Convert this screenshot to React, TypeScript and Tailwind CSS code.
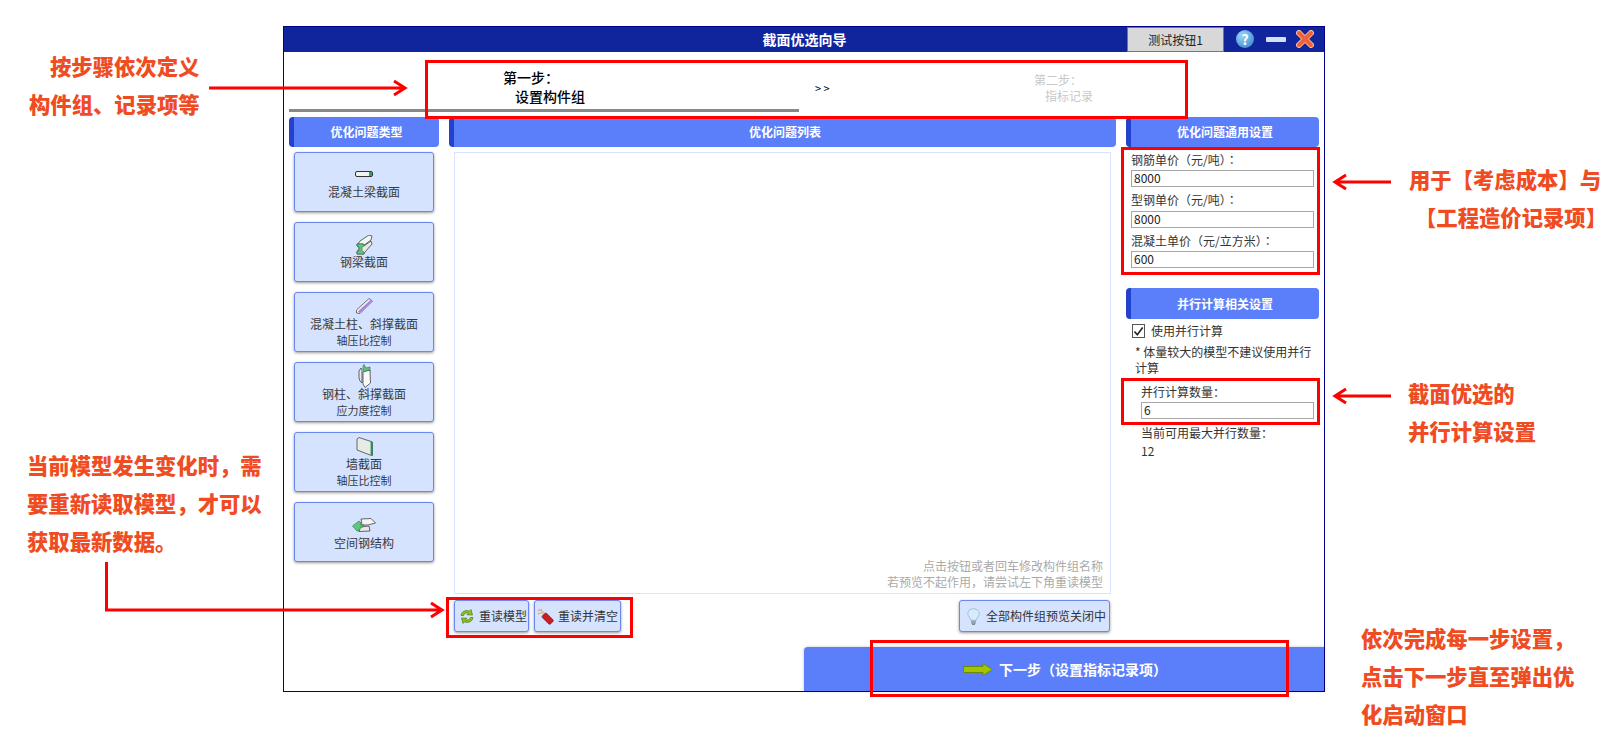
import type { ReactNode } from "react";

function BeamIcon() {
    return (
        <svg width="18" height="6" viewBox="0 0 18 6">
            <rect x="0.5" y="0.5" width="17" height="5" rx="1.5" fill="#f1f4ee" stroke="#333" />
            <rect x="14" y="1" width="3" height="4" fill="#2fa35c" />
        </svg>
    );
}

function SteelBeamIcon() {
    return (
        <svg width="17" height="20" viewBox="0 0 17 20">
            <polygon points="4,6 13,0 16,1 15,5 7,11 2,9" fill="#f4f6f2" stroke="#444" strokeWidth="0.8" />
            <polygon points="8,11 15,6 16,9 9,17 8,19 1,19 1,16 3,15 3,12 1,11 1,9 7,9" fill="#e8ece6" stroke="#444" strokeWidth="0.8" />
            <polygon points="1,9 8,9 8,11 6,12 6,16 8,17 8,19 1,19 1,17 3,16 3,12 1,11" fill="#5fc67e" stroke="#2c6b40" strokeWidth="0.6" />
        </svg>
    );
}

function ColumnBarIcon() {
    return (
        <svg width="17" height="16" viewBox="0 0 17 16">
            <polygon points="0.5,12 13,0.5 16.5,3 4,15.5 0.5,15" fill="#efeaf7" stroke="#555" strokeWidth="0.8" />
            <polygon points="2,13.5 14.5,2 16,3.2 4,15 " fill="#a583e0" />
        </svg>
    );
}

function SteelColumnIcon() {
    return (
        <svg width="13" height="24" viewBox="0 0 13 24">
            <polygon points="1,7 3,4 4,6 4,19 2,17 1,14" fill="#e8e8e8" stroke="#444" strokeWidth="0.8" />
            <polygon points="5,2 6,0.5 8,4 12,3 12,8 8,9 5,6" fill="#5fc67e" stroke="#2c6b40" strokeWidth="0.6" />
            <polygon points="5,8 12,6 12.5,19 7,23.5 5,20" fill="#fafafa" stroke="#444" strokeWidth="0.8" />
        </svg>
    );
}

function WallIcon() {
    return (
        <svg width="17" height="19" viewBox="0 0 17 19">
            <polygon points="1,2 3,0.5 16.5,5 16.5,18.5 14,18 1,13" fill="#e6ebe4" stroke="#444" strokeWidth="0.8" />
            <rect x="14.6" y="5" width="1.8" height="13" fill="#1d9a56" />
        </svg>
    );
}

function SpaceIcon() {
    return (
        <svg width="24" height="14" viewBox="0 0 24 14">
            <polygon points="9,1 19,0.5 23.5,5 16,7 10,7" fill="#f4f4f2" stroke="#444" strokeWidth="0.8" />
            <polygon points="8,9 17,8 18,13 7,13.5" fill="#e8e8e6" stroke="#444" strokeWidth="0.8" />
            <polygon points="0.5,8 7,3 9,5 8,7 12,7 11,9 9,9 7,13 5,13" fill="#5fc67e" stroke="#2c6b40" strokeWidth="0.6" />
        </svg>
    );
}

function RefreshIcon() {
    return (
        <svg width="16" height="17" viewBox="0 0 16 17">
            <path d="M2 7.5C2.5 3.5 7 1.5 10.5 3.2L12 1.5 13.5 7 8 6.8 9.5 5.2C7 4.3 5 5.6 4.6 7.5Z" fill="#8cc21f" stroke="#4f7a10" strokeWidth="0.7" />
            <path d="M14 9.5C13.5 13.5 9 15.5 5.5 13.8L4 15.5 2.5 10 8 10.2 6.5 11.8C9 12.7 11 11.4 11.4 9.5Z" fill="#8cc21f" stroke="#4f7a10" strokeWidth="0.7" />
        </svg>
    );
}

function EraserIcon() {
    return (
        <svg width="17" height="17" viewBox="0 0 17 17">
            <path d="M1 3L3 1.5M4 1L4.5 3.5M1 6L3.5 5" stroke="#f0a050" strokeWidth="1.3" />
            <rect x="4" y="3" width="3" height="3" fill="#d8c090" transform="rotate(45 5.5 4.5)" />
            <rect x="5" y="7.5" width="11.5" height="6" rx="1.5" fill="#c81e24" stroke="#7a1014" strokeWidth="0.6" transform="rotate(45 10.5 10.5)" />
        </svg>
    );
}

function BulbIcon() {
    return (
        <svg width="13" height="17" viewBox="0 0 13 17">
            <path d="M6.5 0.7C3 0.7 0.8 3 0.8 5.8C0.8 8.3 3.5 9.6 3.8 12.3H9.2C9.5 9.6 12.2 8.3 12.2 5.8C12.2 3 10 0.7 6.5 0.7Z" fill="#d6ecfa" stroke="#8fb8d8" strokeWidth="0.8" />
            <rect x="4" y="12.5" width="5" height="3.2" rx="0.8" fill="#9aa4ae" />
            <rect x="5" y="15.6" width="3" height="1.2" fill="#6b747c" />
        </svg>
    );
}

const problemTypes: { lines: string[]; sub?: string; icon: ReactNode; slot: string }[] = [
    { lines: ["混凝土梁截面"], icon: <BeamIcon />, slot: "h-[30px] pt-[18px]" },
    { lines: ["钢梁截面"], icon: <SteelBeamIcon />, slot: "h-[30px] pt-[12px]" },
    { lines: ["混凝土柱、斜撑截面"], sub: "轴压比控制", icon: <ColumnBarIcon />, slot: "h-[22px] pt-[5px]" },
    { lines: ["钢柱、斜撑截面"], sub: "应力度控制", icon: <SteelColumnIcon />, slot: "h-[22px] pt-[1px]" },
    { lines: ["墙截面"], sub: "轴压比控制", icon: <WallIcon />, slot: "h-[22px] pt-[4px]" },
    { lines: ["空间钢结构"], icon: <SpaceIcon />, slot: "h-[31px] pt-[15px]" },
];

function SectionHeader({ title, className }: { title: string; className: string }) {
    return (
        <div className={`flex items-center justify-center rounded-[4px] border-l-[5px] border-[#2342cc] bg-[#5b7ffb] text-[12px] font-bold text-white ${className}`}>
            {title}
        </div>
    );
}

function SmallButton({ icon, label, className }: { icon: ReactNode; label: string; className: string }) {
    return (
        <div className={`flex h-[32px] items-center rounded-[3px] border border-[#6a86f0] bg-[#d5e3ff] text-[12px] text-[#333] shadow-[0_1px_3px_rgba(0,0,0,0.4)] ${className}`}>
            {icon}
            <span className="whitespace-nowrap">{label}</span>
        </div>
    );
}

function PriceField({ label, value, labelClass }: { label: string; value: string; labelClass: string }) {
    return (
        <div className="flex flex-col">
            <div className={`text-[12px] leading-[16px] text-[#333] ${labelClass}`}>{label}</div>
            <div className="h-[17px] border border-[#a8a8a8] bg-white pl-[2px] text-[12px] leading-[14px] text-[#222]">{value}</div>
        </div>
    );
}

function Callout({ lines, className }: { lines: string[]; className: string }) {
    return (
        <div className={`absolute whitespace-nowrap text-[21.33px] font-black leading-[38px] text-[#f04c23] ${className}`}>
            {lines.map(line => (
                <div key={line}>{line}</div>
            ))}
        </div>
    );
}

function RedBox({ className }: { className: string }) {
    return <div className={`pointer-events-none absolute border-[3px] border-[#ff0000] ${className}`} />;
}

export default function App() {
    return (
        <div className="relative h-[747px] w-[1620px] overflow-hidden bg-white pl-[283px] pt-[26px] font-['Noto_Sans_CJK_SC','Liberation_Sans',sans-serif]">
            {/* Wizard window */}
            <div className="flex h-[666px] w-[1042px] flex-col border border-[#00008b] bg-white">
                <div className="relative flex h-[25px] shrink-0 items-center justify-center bg-[#10249c] pl-[1px]">
                    <span className="text-[14px] font-bold text-white">截面优选向导</span>
                    <div className="absolute bottom-0 right-[100px] top-0 flex w-[97px] items-center justify-center border border-[#777] bg-[#d8d8d8] text-[12px] text-[#222]">
                        测试按钮1
                    </div>
                    <div className="absolute right-[70px] top-[3px] flex h-[18px] w-[18px] items-center justify-center rounded-full bg-[radial-gradient(circle_at_35%_30%,#9fd4f7,#2a7fc9)] text-[14px] font-bold leading-none text-white">
                        ?
                    </div>
                    <div className="absolute right-[38px] top-[10px] h-[5px] w-[20px] rounded-[1px] bg-[#d3e1f3]" />
                    <svg className="absolute right-[10px] top-[3px]" width="18" height="18" viewBox="0 0 18 18">
                        <path d="M3 3L15 15M15 3L3 15" stroke="#f8b9a0" strokeWidth="6" strokeLinecap="round" />
                        <path d="M3 3L15 15M15 3L3 15" stroke="#f0623a" strokeWidth="4" strokeLinecap="round" />
                    </svg>
                </div>

                {/* Steps */}
                <div className="flex h-[60px] shrink-0 pl-[5px]">
                    <div className="w-[510px] border-b-[3px] border-[#888] pl-[214px] pt-[16px] text-[14px] font-medium leading-[19px] text-black">
                        <div>第一步：</div>
                        <div className="pl-[12px]">设置构件组</div>
                    </div>
                    <div className="w-[235px] pl-[16px] pt-[29px] text-[11px] leading-[14px] tracking-[2.5px] text-black">&gt;&gt;</div>
                    <div className="pt-[20px] text-[12px] leading-[16px] text-[#c8c8c8]">
                        <div>第二步：</div>
                        <div className="pl-[11px]">指标记录</div>
                    </div>
                </div>

                {/* Main columns */}
                <div className="mt-[5px] flex min-h-0 flex-1 gap-[10px] pl-[5px]">
                    <div className="flex w-[150px] flex-col">
                        <SectionHeader title="优化问题类型" className="h-[30px] shrink-0" />
                        <div className="mt-[5px] flex flex-col gap-[10px] px-[5px]">
                            {problemTypes.map(item => (
                                <div
                                    key={item.lines[0]}
                                    className="flex h-[60px] flex-col items-center rounded-[3px] border border-[#6a86f0] bg-[#d5e3ff] text-[12px] leading-[17px] text-[#3a3a3a] shadow-[0_1px_3px_rgba(0,0,0,0.4)]"
                                >
                                    <div className={`shrink-0 ${item.slot}`}>{item.icon}</div>
                                    {item.lines.map(line => (
                                        <div key={line} className="whitespace-nowrap">{line}</div>
                                    ))}
                                    {item.sub && <div className="text-[11px] leading-[16px]">{item.sub}</div>}
                                </div>
                            ))}
                        </div>
                    </div>

                    <div className="flex w-[667px] flex-col">
                        <SectionHeader title="优化问题列表" className="h-[30px] shrink-0" />
                        <div className="mx-[5px] mt-[5px] flex h-[442px] flex-col items-end justify-end border border-[#d6e4ff] pb-[3px] pr-[7px] text-[12px] leading-[16px] text-[#aaa]">
                            <div>点击按钮或者回车修改构件组名称</div>
                            <div>若预览不起作用，请尝试左下角重读模型</div>
                        </div>
                        <div className="mx-[5px] mt-[6px] flex justify-between">
                            <div className="flex gap-[5px]">
                                <SmallButton icon={<RefreshIcon />} label="重读模型" className="w-[75px] gap-[4px] pl-[4px]" />
                                <SmallButton icon={<EraserIcon />} label="重读并清空" className="w-[87px] gap-[4px] pl-[2px]" />
                            </div>
                            <SmallButton icon={<BulbIcon />} label="全部构件组预览关闭中" className="mr-[1px] w-[151px] gap-[6px] pl-[7px]" />
                        </div>
                    </div>

                    <div className="flex w-[193px] flex-col">
                        <SectionHeader title="优化问题通用设置" className="h-[30px] shrink-0" />
                        <div className="mt-[5px] flex flex-col gap-[5px] px-[5px]">
                            <PriceField label="钢筋单价（元/吨）：" value="8000" labelClass="mb-[2px] font-['Noto_Sans_CJK_TC','Noto_Sans_CJK_SC',sans-serif]" />
                            <PriceField label="型钢单价（元/吨）：" value="8000" labelClass="mb-[3px] font-['Noto_Sans_CJK_TC','Noto_Sans_CJK_SC',sans-serif]" />
                            <PriceField label="混凝土单价（元/立方米）：" value="600" labelClass="mb-[2px] font-['Noto_Sans_CJK_TC','Noto_Sans_CJK_SC',sans-serif]" />
                        </div>
                        <SectionHeader title="并行计算相关设置" className="mt-[20px] h-[31px] shrink-0" />
                        <div className="mt-[5px] flex items-center gap-[6px] pl-[6px] text-[12px] leading-[14px] text-[#333]">
                            <div className="flex h-[14px] w-[13px] items-center justify-center border border-[#555] bg-white">
                                <svg width="11" height="11" viewBox="0 0 11 11">
                                    <path d="M1.5 5.5L4.3 8.8L9.7 1.5" fill="none" stroke="#222" strokeWidth="1.6" />
                                </svg>
                            </div>
                            <span>使用并行计算</span>
                        </div>
                        <div className="mt-[6px] pl-[9px] pr-[5px] text-[12px] leading-[16px] text-[#333]">
                            * 体量较大的模型不建议使用并行计算
                        </div>
                        <div className="mt-[8px] pl-[15px] pr-[5px]">
                            <PriceField label="并行计算数量：" value="6" labelClass="mb-[2px]" />
                        </div>
                        <div className="mt-[5px] pl-[15px] text-[12px] leading-[18px] text-[#333]">
                            <div>当前可用最大并行数量：</div>
                            <div>12</div>
                        </div>
                    </div>
                </div>

                {/* Next step */}
                <div className="flex h-[44px] w-[520px] shrink-0 items-center gap-[6px] self-end rounded-tl-[4px] bg-[#5b7ffb] pl-[159px] text-[14px] font-bold text-white shadow-[0_0_3px_rgba(0,0,0,0.25)]">
                    <svg width="30" height="13" viewBox="0 0 30 13">
                        <polygon points="0.5,3.5 20,3.5 20,0.5 29.5,6.5 20,12.5 20,9.5 0.5,9.5" fill="#a3c400" stroke="#6d8a10" />
                    </svg>
                    <span>下一步（设置指标记录项）</span>
                </div>
            </div>

            {/* Annotation frames */}
            <RedBox className="left-[425px] top-[60px] h-[59px] w-[763px]" />
            <RedBox className="left-[1121px] top-[147px] h-[128px] w-[199px]" />
            <RedBox className="left-[1121px] top-[378px] h-[47px] w-[199px]" />
            <RedBox className="left-[446px] top-[597px] h-[41px] w-[187px]" />
            <RedBox className="left-[870px] top-[640px] h-[57px] w-[419px]" />

            {/* Arrows */}
            <svg className="pointer-events-none absolute left-0 top-0" width="1620" height="747" viewBox="0 0 1620 747">
                <g fill="none" stroke="#ff0000" strokeWidth="3">
                    <path d="M209 88H404M394 81L405 88L394 95" />
                    <path d="M106.5 562V610H440M431 603L442 610L431 617" />
                    <path d="M1391 182H1335M1346 175L1335 182L1346 189" />
                    <path d="M1391 396H1335M1346 389L1335 396L1346 403" />
                </g>
            </svg>

            {/* Callouts */}
            <Callout lines={["按步骤依次定义"]} className="left-[50px] top-[47px]" />
            <Callout lines={["构件组、记录项等"]} className="left-[29px] top-[85px]" />
            <Callout lines={["当前模型发生变化时，需", "要重新读取模型，才可以", "获取最新数据。"]} className="left-[27px] top-[446px]" />
            <Callout lines={["用于【考虑成本】与"]} className="left-[1409px] top-[160px]" />
            <Callout lines={["【工程造价记录项】"]} className="left-[1415px] top-[198px]" />
            <Callout lines={["截面优选的", "并行计算设置"]} className="left-[1408px] top-[374px]" />
            <Callout lines={["依次完成每一步设置，", "点击下一步直至弹出优", "化启动窗口"]} className="left-[1361px] top-[619px]" />
        </div>
    );
}
